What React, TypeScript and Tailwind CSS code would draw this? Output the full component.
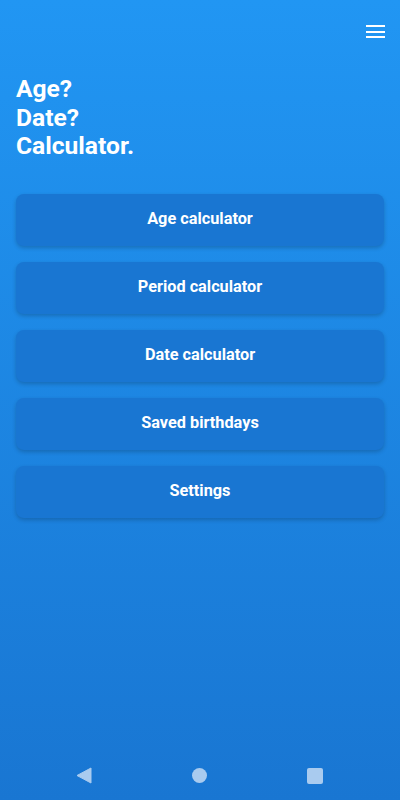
import React from "react";

const ITEMS = [
  "Age calculator",
  "Period calculator",
  "Date calculator",
  "Saved birthdays",
  "Settings",
];

export default function App() {
  return (
    <div
      className="flex h-[800px] w-[400px] flex-col bg-gradient-to-b from-[#2196F3] to-[#1976D2] text-white"
      style={{ fontFamily: "Roboto, 'Noto Sans', sans-serif" }}
    >
      {/* Top bar */}
      <div className="flex h-[56px] items-end justify-end px-[15px] pb-[18px]">
        <div className="flex w-[19px] flex-col gap-[3.5px]">
          <div className="h-[2px] bg-white" />
          <div className="h-[2px] bg-white" />
          <div className="h-[2px] bg-white" />
        </div>
      </div>

      {/* Heading */}
      <h1 className="mt-[19px] px-4 text-[24.6px] font-bold leading-[28.5px]">
        Age?
        <br />
        Date?
        <br />
        Calculator.
      </h1>

      {/* Menu buttons */}
      <div className="mt-[33px] flex flex-col gap-4 px-4">
        {ITEMS.map((label) => (
          <button
            key={label}
            className="flex h-[52px] items-center justify-center rounded-lg bg-[#1976D2] text-[16.3px] font-bold text-white shadow-[0_2px_4px_rgba(0,0,0,0.2)]"
          >
            {label}
          </button>
        ))}
      </div>

      <div className="flex-1" />

      {/* System nav bar */}
      <div className="flex h-[50px] items-center justify-between pl-[76px] pr-[77px] pt-[1px]">
        <svg width="16" height="17" viewBox="0 0 16 17">
          <path d="M15 1 L15 16 L1 8.5 Z" fill="#A9CBEF" stroke="#A9CBEF" strokeWidth="1" strokeLinejoin="round" />
        </svg>
        <div className="h-[15px] w-[15px] rounded-full bg-[#A9CBEF]" />
        <div className="h-[16px] w-[16px] rounded-[2px] bg-[#A9CBEF]" />
      </div>
    </div>
  );
}
